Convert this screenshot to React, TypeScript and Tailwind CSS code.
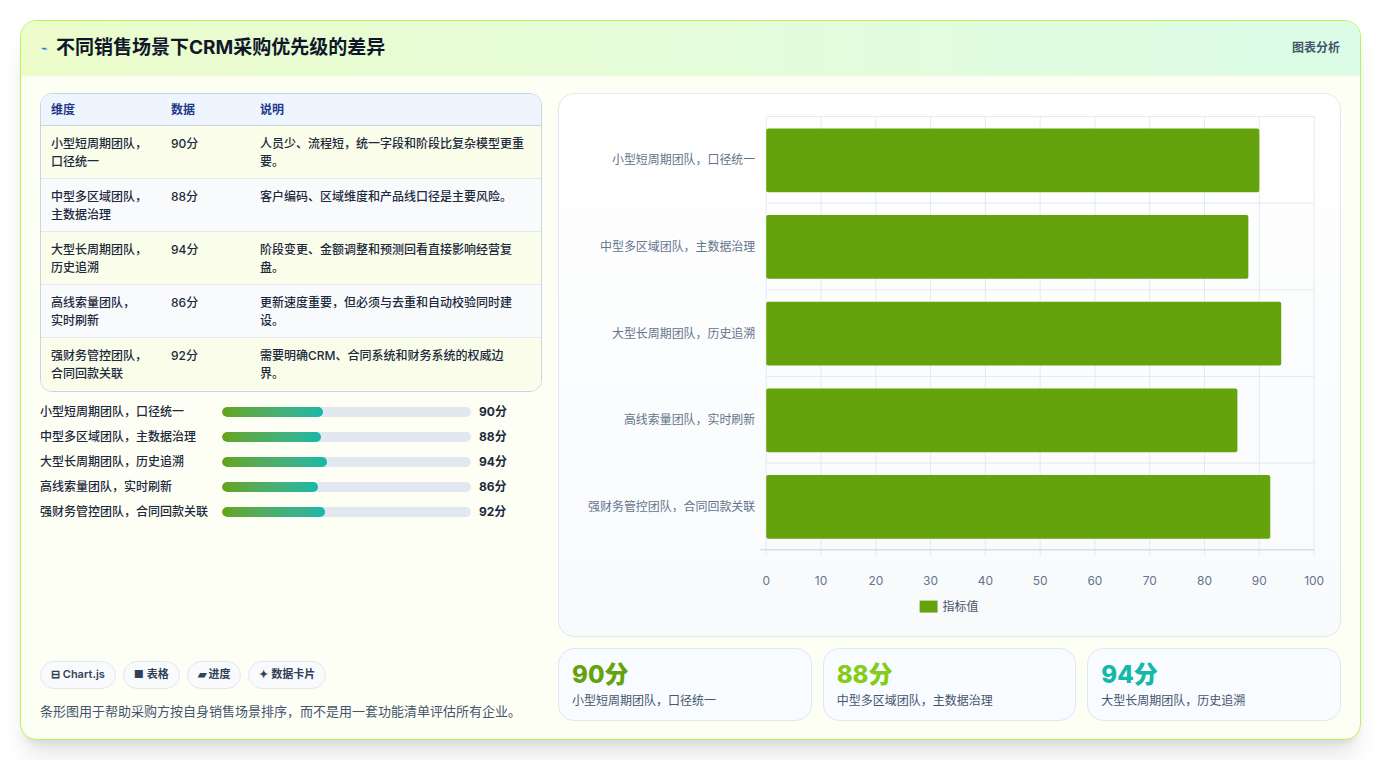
import React from 'react';

const rows = [
  { name: '小型短周期团队，口径统一', v: 90, desc: '人员少、流程短，统一字段和阶段比复杂模型更重要。' },
  { name: '中型多区域团队，主数据治理', v: 88, desc: '客户编码、区域维度和产品线口径是主要风险。' },
  { name: '大型长周期团队，历史追溯', v: 94, desc: '阶段变更、金额调整和预测回看直接影响经营复盘。' },
  { name: '高线索量团队，实时刷新', v: 86, desc: '更新速度重要，但必须与去重和自动校验同时建设。' },
  { name: '强财务管控团队，合同回款关联', v: 92, desc: '需要明确CRM、合同系统和财务系统的权威边界。' },
];

const splitName = (n: string) => {
  const i = n.indexOf('，');
  return [n.slice(0, i + 1), n.slice(i + 1)];
};

const Chart = () => {
  const x0 = 208, x1 = 758, y0 = 22, band = 87;
  const sx = (v: number) => x0 + ((x1 - x0) * v) / 100;
  return (
    <svg width="100%" height="100%" viewBox="0 0 784 543" className="block">
      {Array.from({ length: 11 }).map((_, i) => (
        <g key={i}>
          <line x1={sx(i * 10)} x2={sx(i * 10)} y1={y0} y2={y0 + band * 5 + 6} stroke="#e5e9f0" />
          <text x={sx(i * 10)} y={492} textAnchor="middle" fontSize="12" fill="#64748b">{i * 10}</text>
        </g>
      ))}
      {Array.from({ length: 6 }).map((_, i) => (
        <line key={i} x1={x0} x2={x1} y1={y0 + band * i} y2={y0 + band * i} stroke="#e5e9f0" />
      ))}
      <line x1={x0 - 6} x2={x1} y1={y0 + band * 5} y2={y0 + band * 5} stroke="#cbd5e1" />
      {rows.map((r, i) => (
        <g key={r.name}>
          <rect x={x0} y={y0 + band * i + 12} width={sx(r.v) - x0} height={64} rx="2" fill="#65a30d" />
          <text x={x0 - 11} y={y0 + band * i + 48} textAnchor="end" fontSize="12" fill="#64748b">{r.name}</text>
        </g>
      ))}
      <rect x={362} y={508} width={18} height={12} fill="#65a30d" />
      <text x={385} y={518} fontSize="12" fill="#475569">指标值</text>
    </svg>
  );
};

export default function App() {
  return (
    <div className="w-[1381px] h-[760px] bg-white p-5" style={{ fontFamily: 'Inter, "Noto Sans CJK SC", sans-serif' }}>
      <div className="h-[720px] rounded-2xl border border-lime-300 bg-[#fdfff5] shadow-xl overflow-hidden flex flex-col">
        <div className="h-[55px] shrink-0 flex items-center justify-between px-5 bg-gradient-to-r from-[#ecfccb] to-[#dcfce7] border-b border-lime-100">
          <div className="flex items-center gap-2">
            <span className="text-[11px] text-blue-600">⌁</span>
            <h1 className="text-[19px] font-bold text-slate-900">不同销售场景下CRM采购优先级的差异</h1>
          </div>
          <span className="text-xs font-semibold text-slate-600">图表分析</span>
        </div>
        <div className="flex-1 flex gap-4 px-[19px] pt-[17px] pb-[19px]">
          <div className="w-[502px] flex flex-col">
            <div className="rounded-xl border border-slate-300 overflow-hidden text-xs">
              <div className="flex h-8 items-center bg-[#eef5ff] border-b border-slate-300 font-semibold text-[#1e3a8a]">
                <div className="w-[130px] pl-[10px]">维度</div>
                <div className="w-[89px]">数据</div>
                <div>说明</div>
              </div>
              {rows.map((r, i) => (
                <div key={r.name} className={`flex h-[53px] pt-[9px] leading-[18px] font-medium text-slate-800 ${i % 2 ? 'bg-[#f8fafc]' : 'bg-[#f9fde9]'} ${i < 4 ? 'border-b border-slate-200' : ''}`}>
                  <div className="w-[130px] pl-[10px] pr-2">{splitName(r.name)[0]}<br />{splitName(r.name)[1]}</div>
                  <div className="w-[89px]">{r.v}分</div>
                  <div className="flex-1 pr-4">{r.desc}</div>
                </div>
              ))}
            </div>
            <div className="mt-[11px] flex flex-col gap-[7px]">
              {rows.map((r) => (
                <div key={r.name} className="flex items-center h-[18px] text-xs text-slate-800 font-medium">
                  <div className="w-[182px]">{r.name}</div>
                  <div className="w-[249px] h-[10px] rounded-full bg-slate-200 overflow-hidden">
                    <div className="h-full rounded-full bg-gradient-to-r from-[#65a30d] to-[#14b8a6]" style={{ width: `${r.v * 0.45}%` }} />
                  </div>
                  <div className="ml-2 font-bold">{r.v}分</div>
                </div>
              ))}
            </div>
            <div className="mt-auto">
              <div className="flex gap-[7px] text-[11px] font-semibold text-slate-700">
                {['⊟ Chart.js', '■ 表格', '▰ 进度', '✦ 数据卡片'].map((t) => (
                  <span key={t} className="h-7 px-[10px] flex items-center rounded-full border border-slate-200 bg-[#f8fafc]">{t}</span>
                ))}
              </div>
              <p className="mt-[13px] text-[13px] text-slate-600">条形图用于帮助采购方按自身销售场景排序，而不是用一套功能清单评估所有企业。</p>
            </div>
          </div>
          <div className="flex-1 flex flex-col gap-[11px]">
            <div className="h-[544px] rounded-2xl border border-slate-200 bg-gradient-to-b from-white to-[#f8fafc] overflow-hidden">
              <Chart />
            </div>
            <div className="grid grid-cols-3 gap-[11px]">
              {[
                { r: rows[0], c: 'text-[#65a30d]' },
                { r: rows[1], c: 'text-[#84cc16]' },
                { r: rows[2], c: 'text-[#14b8a6]' },
              ].map(({ r, c }) => (
                <div key={r.name} className="h-[73px] rounded-2xl border border-slate-200 bg-[#f8fbff] px-[13px] pt-[10px]">
                  <div className={`text-[24px] font-extrabold leading-8 ${c}`}>{r.v}分</div>
                  <div className="mt-[2px] text-xs text-slate-600">{r.name}</div>
                </div>
              ))}
            </div>
          </div>
        </div>
      </div>
    </div>
  );
}
